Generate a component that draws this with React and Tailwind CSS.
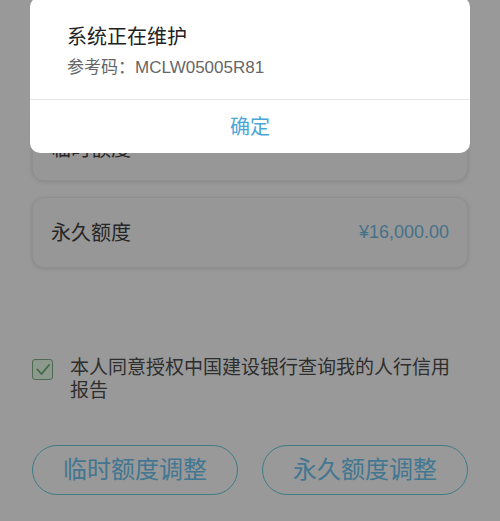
import React from 'react';

const font = { fontFamily: '"Liberation Sans", "Noto Sans CJK SC", sans-serif' };

const Card = ({ label, value, offset }) => (
  <div className={`mx-[32px] h-[71px] flex items-center justify-between px-[18px] rounded-xl bg-[#979797] border border-[#8f8f8f] shadow-[0_1px_4px_rgba(0,0,0,0.12)] ${offset ? 'pt-[6px]' : ''}`}>
    <span className="text-[20px] text-[#262626]">{label}</span>
    {value && <span className="text-[18px] text-[#46718a]">{value}</span>}
  </div>
);

const App = () => {
  return (
    <div className="relative w-[500px] h-[521px] overflow-hidden bg-[#999999]" style={font}>
      {/* page behind the overlay */}
      <div className="pt-[110px] flex flex-col gap-[16px]">
        <Card label="临时额度" offset />
        <Card label="永久额度" value="¥16,000.00" />
      </div>

      <div className="mt-[88px] ml-[32px] flex items-start gap-[17px]">
        <div className="mt-[3px] w-[21px] h-[21px] shrink-0 rounded-[3px] border border-[#4f6a52] bg-[#8d998d] flex items-center justify-center">
          <svg width="14" height="12" viewBox="0 0 14 12" fill="none">
            <path d="M1.5 5.5 L5.5 10 L13 1" stroke="#3f6a44" strokeWidth="1.8" strokeLinecap="round" strokeLinejoin="round" />
          </svg>
        </div>
        <p className="w-[385px] text-[19px] leading-[23px] text-[#2e2e2e]">本人同意授权中国建设银行查询我的人行信用报告</p>
      </div>

      <div className="mt-[43px] mx-[32px] flex gap-[24px]">
        <button className="flex-1 h-[50px] rounded-full border border-[#3e7c86] text-[24px] text-[#427691]">临时额度调整</button>
        <button className="flex-1 h-[50px] rounded-full border border-[#3e7c86] text-[24px] text-[#427691]">永久额度调整</button>
      </div>

      {/* alert dialog */}
      <div className="absolute left-[30px] top-[-3px] w-[440px] rounded-[10px] bg-white overflow-hidden">
        <div className="pt-[26px] pb-[19px] px-[37px]">
          <h2 className="text-[20px] leading-[28px] text-[#222222]">系统正在维护</h2>
          <p className="mt-[5px] text-[17px] leading-[24px] text-[#666666]">参考码：MCLW05005R81</p>
        </div>
        <div className="border-t border-[#e6e6e6] h-[54px] flex items-center justify-center text-[20px] text-[#4aa6d8]">确定</div>
      </div>
    </div>
  );
};

export default App;
